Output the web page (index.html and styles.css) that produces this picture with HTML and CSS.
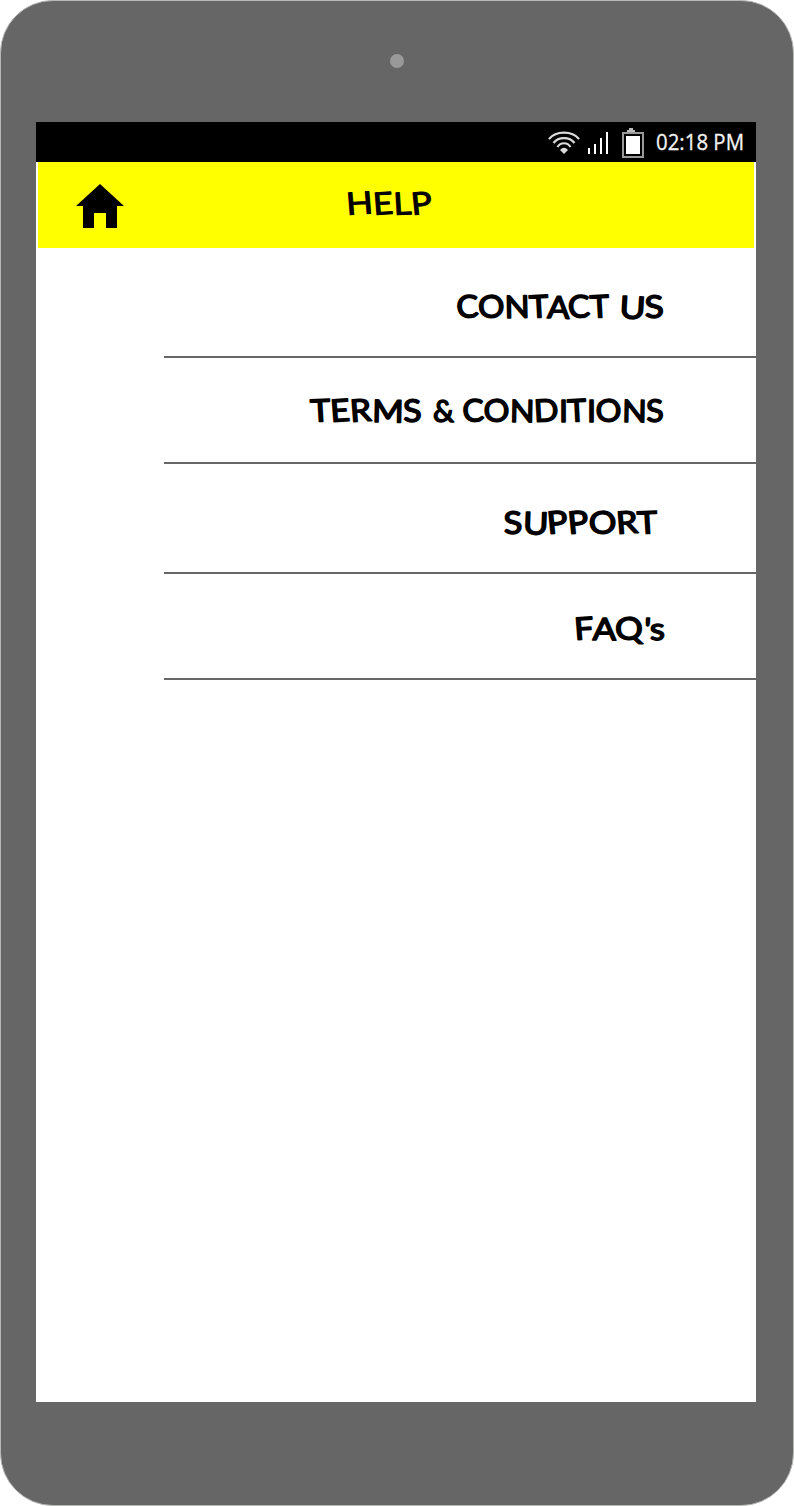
FILE: index.html
```html
<!DOCTYPE html>
<html lang="en">
<head>
<meta charset="utf-8">
<title>Help</title>
<link rel="stylesheet" href="styles.css">
</head>
<body>
<div class="device">
  <div class="camera"></div>
  <main class="screen">
    <div class="status">
      <svg class="signals" width="98" height="40" viewBox="0 0 98 40">
        <g fill="none" stroke="#dcdcdc" stroke-width="2.2">
          <path d="M1 17C8 8.500 24 8.500 31 17"/>
          <path d="M5.500 21C10.500 14.500 21.500 14.500 26.500 21"/>
          <path d="M9.500 25C12.500 20 19.500 20 22.500 25"/>
        </g>
        <path d="M12 28Q16 23.500 20 28L16 32Z" fill="#dcdcdc"/>
        <path d="M40 26h2v6h-2zM46 22h2v10h-2zM52 16h2v16h-2zM58 10h2v22h-2z" fill="#fff"/>
        <path d="M79 8h2v-2h4v2h2v2h-8z" fill="#bbb"/>
        <rect x="75" y="11" width="20" height="24" fill="none" stroke="#999" stroke-width="2"/>
        <rect x="78" y="14" width="14" height="18" fill="#fff"/>
      </svg>
      <svg class="clock" width="92" height="40"><text x="1" y="28" textLength="88" lengthAdjust="spacingAndGlyphs">02:18 PM</text></svg>
    </div>
    <header class="header">
      <svg class="home" width="48" height="44" viewBox="0 0 48 44"><path d="M24 0L48 22H41V44H30V29H18V44H7V22H0Z"/></svg>
      <svg class="title" width="100" height="50"><text x="1" y="33" textLength="86" lengthAdjust="spacingAndGlyphs" rotate="-4 -4 -3 -5">HELP</text></svg>
    </header>
    <nav class="menu">
      <a class="item first"><svg class="label" width="380" height="50"><text x="166" y="38" textLength="153" lengthAdjust="spacingAndGlyphs" rotate="-3 -2 -1 -3 2 -3 -3">CONTACT</text><text x="328" y="38" textLength="45" lengthAdjust="spacingAndGlyphs" rotate="3 -2">US</text></svg></a>
      <a class="item second"><svg class="label" width="380" height="50"><text x="20" y="38" textLength="111" lengthAdjust="spacingAndGlyphs" rotate="-3 -4 -4 1 -2">TERMS</text><text x="142" y="38" textLength="21" lengthAdjust="spacingAndGlyphs">&amp;</text><text x="172" y="38" textLength="201" lengthAdjust="spacingAndGlyphs" rotate="-3 -2 1 -3 0 -3 0 -2 1 -2">CONDITIONS</text></svg></a>
      <a class="item third"><svg class="label" width="380" height="50"><text x="213" y="38" textLength="154" lengthAdjust="spacingAndGlyphs" rotate="-2 2 -5 -5 -2 -4 -3">SUPPORT</text></svg></a>
      <a class="item fourth"><svg class="label" width="380" height="50"><text x="284" y="38" textLength="90" lengthAdjust="spacingAndGlyphs" rotate="-4 1 -2 3 -1">FAQ's</text></svg></a>
    </nav>
  </main>
</div>
</body>
</html>
```
FILE: styles.css
```css
* { box-sizing: border-box; }
body { margin: 0; background: #fff; }
svg { display: block; flex: none; overflow: visible; }
.device {
  width: 794px;
  height: 1506px;
  padding: 53px 37px 0 35px;
  background: #666;
  border: 1px solid #b5b8b5;
  border-radius: 53px;
}
.camera {
  width: 14px;
  height: 14px;
  margin: 0 0 54px 354px;
  border-radius: 50%;
  background: #999;
}
.screen { width: 720px; height: 1280px; background: #fff; }
.status {
  display: flex;
  height: 40px;
  padding-left: 512px;
  gap: 9px;
  background: #000;
}
.clock text { font: 22px "Open Sans", sans-serif; fill: #f2f2f2; stroke: #f2f2f2; stroke-width: 0.3px; }
.header {
  display: flex;
  align-items: flex-start;
  height: 86px;
  margin: 0 2px;
  background: #ff0;
}
.home { margin: 22px 0 0 38px; }
.title { margin: 20px 0 0 222px; }
/* Thin face with a round-joined stroke gives soft marker-like letters */
.title text, .label text {
  font: 400 31px Lato, sans-serif;
  fill: #000;
  stroke: #000;
  stroke-linejoin: round;
}
.title text { stroke-width: 1px; }
.label text { stroke-width: 1.5px; }
.menu { width: 592px; margin-left: 128px; }
.item {
  display: flex;
  padding-left: 127px;
  border-bottom: 2px solid #666;
}
.first { height: 110px; padding-top: 32px; }
.second { height: 106px; padding-top: 26px; }
.third { height: 110px; padding-top: 32px; }
.fourth { height: 106px; padding-top: 28px; }
```
